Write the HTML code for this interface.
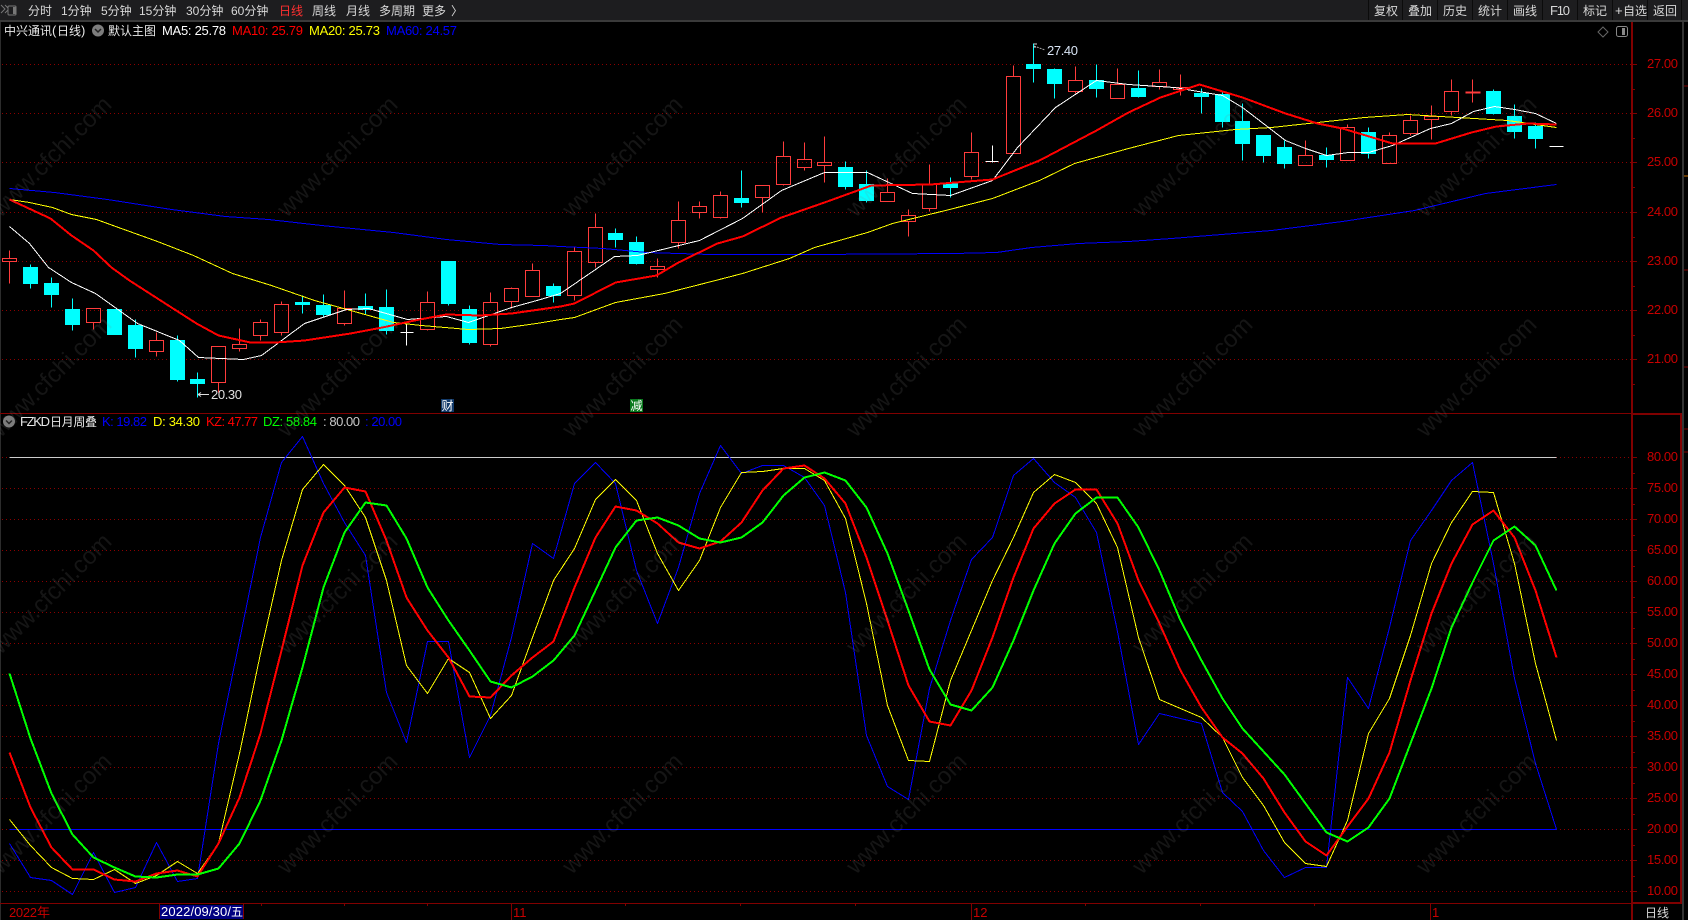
<!DOCTYPE html>
<html lang="zh">
<head>
<meta charset="utf-8">
<title>中兴通讯 日线</title>
<style>
html,body{margin:0;padding:0;background:#000;width:1688px;height:920px;overflow:hidden}
svg{display:block;position:absolute;left:0;top:0}
text{font-family:"Liberation Sans","Noto Sans CJK SC",sans-serif;font-size:12px}
.n{font-size:13px}
.tb{fill:#d8d8d8}
.ax{fill:#c80000;font-size:13px}
.wm{font-size:24px;fill:rgba(128,128,128,.16)}
.l{fill:none;shape-rendering:crispEdges;stroke-linejoin:round}
</style>
</head>
<body>
<svg width="1688" height="920" viewBox="0 0 1688 920" xmlns="http://www.w3.org/2000/svg">
<rect width="1688" height="920" fill="#000"/>

<!-- toolbar -->
<rect x="0" y="0" width="1688" height="20" fill="#1d1d1f"/>
<rect x="0" y="20" width="1688" height="2" fill="#3a3a3a"/>
<path d="M1368.5 0V20M1402.5 0V20M1437.5 0V20M1472.5 0V20M1507.5 0V20M1542.5 0V20M1577.5 0V20M1612.5 0V20M1647.5 0V20M1681.5 0V20" stroke="#0b0b0b" stroke-width="1"/>
<path d="M1 5l4 4-4 4M5 5l4 4-4 4" fill="none" stroke="#777" stroke-width="1"/>
<rect x="8" y="6" width="8" height="9" rx="1" fill="#1d1d1f" stroke="#777"/><rect x="13" y="7" width="3" height="7" fill="#777"/>

<g class="tb">
<text x="28" y="15">分时</text>
<text x="61" y="15">1分钟</text>
<text x="101" y="15">5分钟</text>
<text x="139" y="15">15分钟</text>
<text x="186" y="15">30分钟</text>
<text x="231" y="15">60分钟</text>
<text x="279" y="15" style="fill:#ff3030">日线</text>
<text x="312" y="15">周线</text>
<text x="346" y="15">月线</text>
<text x="379" y="15">多周期</text>
<text x="422" y="15">更多</text>
<text x="451" y="15">〉</text>
<text x="1374" y="15">复权</text>
<text x="1408" y="15">叠加</text>
<text x="1443" y="15">历史</text>
<text x="1478" y="15">统计</text>
<text x="1513" y="15">画线</text>
<text x="1550" y="15" class="n" textLength="20">F10</text>
<text x="1583" y="15">标记</text>
<text x="1615" y="15" class="n">+</text><text x="1623" y="15">自选</text>
<text x="1653" y="15">返回</text>
</g>

<!-- frame -->
<rect x="0" y="22" width="1" height="898" fill="#2c2c2c"/>
<rect x="1682" y="22" width="2" height="898" fill="#333"/>
<path d="M1684 86h4M1684 270h4M1684 367h4M1684 429h4M1684 452h4" stroke="#800000" stroke-width="1"/>
<path d="M1684 176h4" stroke="#c87000" stroke-width="1"/>

<!-- grid -->
<path d="M2 64.5H1632M2 113.5H1632M2 162.5H1632M2 212.5H1632M2 261.5H1632M2 310.5H1632M2 359.5H1632M2 457.5H9M1556 457.5H1632M2 488.5H1632M2 519.5H1632M2 550.5H1632M2 581.5H1632M2 612.5H1632M2 643.5H1632M2 674.5H1632M2 705.5H1632M2 736.5H1632M2 767.5H1632M2 798.5H1632M2 829.5H9M1556 829.5H1632M2 860.5H1632M2 891.5H1632" stroke="#8c0000" stroke-width="1" stroke-dasharray="1 3" fill="none"/>

<!-- axes -->
<path d="M0 413.5H1632" stroke="#800000" stroke-width="1"/>
<path d="M0 903.5H1682" stroke="#800000" stroke-width="1"/>
<rect x="1631" y="22" width="2" height="898" fill="#800000"/>
<rect x="1632" y="413" width="50" height="2" fill="#800000"/>
<rect x="1632" y="902" width="50" height="2" fill="#800000"/>
<rect x="1680" y="413" width="2" height="491" fill="#800000"/>
<path d="M1632 64.5h5M1632 113.5h5M1632 162.5h5M1632 212.5h5M1632 261.5h5M1632 310.5h5M1632 359.5h5M1632 457.5h5M1632 488.5h5M1632 519.5h5M1632 550.5h5M1632 581.5h5M1632 612.5h5M1632 643.5h5M1632 674.5h5M1632 705.5h5M1632 736.5h5M1632 767.5h5M1632 798.5h5M1632 829.5h5M1632 860.5h5M1632 891.5h5" stroke="#800000" stroke-width="1"/>
<path d="M1632 89.5h3M1632 138.5h3M1632 187.5h3M1632 237.5h3M1632 286.5h3M1632 335.5h3M1632 384.5h3M1632 473.5h3M1632 504.5h3M1632 535.5h3M1632 566.5h3M1632 597.5h3M1632 628.5h3M1632 659.5h3M1632 690.5h3M1632 721.5h3M1632 752.5h3M1632 783.5h3M1632 814.5h3M1632 845.5h3M1632 876.5h3" stroke="#800000" stroke-width="1"/>
<g class="ax">
<text class="ax" x="1647" y="68" textLength="31">27.00</text>
<text class="ax" x="1647" y="117" textLength="31">26.00</text>
<text class="ax" x="1647" y="166" textLength="31">25.00</text>
<text class="ax" x="1647" y="216" textLength="31">24.00</text>
<text class="ax" x="1647" y="265" textLength="31">23.00</text>
<text class="ax" x="1647" y="314" textLength="31">22.00</text>
<text class="ax" x="1647" y="363" textLength="31">21.00</text>
<text class="ax" x="1647" y="461" textLength="31">80.00</text>
<text class="ax" x="1647" y="492" textLength="31">75.00</text>
<text class="ax" x="1647" y="523" textLength="31">70.00</text>
<text class="ax" x="1647" y="554" textLength="31">65.00</text>
<text class="ax" x="1647" y="585" textLength="31">60.00</text>
<text class="ax" x="1647" y="616" textLength="31">55.00</text>
<text class="ax" x="1647" y="647" textLength="31">50.00</text>
<text class="ax" x="1647" y="678" textLength="31">45.00</text>
<text class="ax" x="1647" y="709" textLength="31">40.00</text>
<text class="ax" x="1647" y="740" textLength="31">35.00</text>
<text class="ax" x="1647" y="771" textLength="31">30.00</text>
<text class="ax" x="1647" y="802" textLength="31">25.00</text>
<text class="ax" x="1647" y="833" textLength="31">20.00</text>
<text class="ax" x="1647" y="864" textLength="31">15.00</text>
<text class="ax" x="1647" y="895" textLength="31">10.00</text>
</g>

<!-- bottom axis -->
<path d="M261.5 903v3M344.5 903v3M427.5 903v3M625.5 903v3M740.5 903v3M855.5 903v3M1085.5 903v3M1200.5 903v3M1314.5 903v3" stroke="#800000"/>
<path d="M511.5 903v17M971.5 903v17M1430.5 903v17M1632 903v17" stroke="#800000" stroke-width="1"/>
<text x="9" y="917" class="n" style="fill:#c80000" textLength="28">2022</text><text x="37" y="917" class="n" style="fill:#c80000">年</text>
<rect x="160" y="905" width="84" height="14" fill="#000080"/>
<path d="M159.500 904v15M243.500 904v15" stroke="#800000"/>
<text x="161" y="916" class="n" style="fill:#fff" textLength="70">2022/09/30/</text><text x="231" y="916" style="fill:#fff">五</text>
<text x="513" y="917" class="n" style="fill:#c80000">11</text>
<text x="973" y="917" class="n" style="fill:#c80000">12</text>
<text x="1432" y="917" class="n" style="fill:#c80000">1</text>
<text x="1645" y="917" style="fill:#d8d8d8">日线</text>

<g transform="translate(.5,.5)">
<!-- candles -->
<path fill="none" stroke="#ff3c3c" stroke-width="1" d="
M9 250V258M9 261V283M2 258H16V261H2Z
M93 322V329M86 308H100V322H86Z
M156 332V340M156 351V356M149 340H163V351H149Z
M218 382V392M211 346H225V382H211Z
M239 328V344M239 348V351M232 344H246V348H232Z
M260 319V322M260 335V340M253 322H267V335H253Z
M281 301V304M281 332V335M274 304H288V332H274Z
M344 290V308M344 323V325M337 308H351V323H337Z
M427 291V302M427 329V330M420 302H434V329H420Z
M490 292V302M490 344V346M483 302H497V344H483Z
M511 287V288M511 301V308M504 288H518V301H504Z
M532 263V270M525 270H539V296H525Z
M574 247V251M574 295V300M567 251H581V295H567Z
M595 213V227M595 262V267M588 227H602V262H588Z
M657 258V266M657 269V277M650 266H664V269H650Z
M678 201V220M678 242V248M671 220H685V242H671Z
M699 201V206M699 212V218M692 206H706V212H692Z
M720 191V195M720 217V218M713 195H727V217H713Z
M762 197V212M755 185H769V197H755Z
M783 141V156M783 184V185M776 156H790V184H776Z
M804 142V159M804 167V170M797 159H811V167H797Z
M824 136V162M824 165V182M817 162H831V165H817Z
M887 178V192M880 192H894V201H880Z
M908 209V215M908 221V236M901 215H915V221H901Z
M929 164V184M929 208V211M922 184H936V208H922Z
M971 132V152M971 176V179M964 152H978V176H964Z
M1013 65V76M1006 76H1020V153H1006Z
M1075 66V80M1075 91V93M1068 80H1082V91H1068Z
M1117 68V84M1110 84H1124V98H1110Z
M1159 69V82M1159 86V89M1152 82H1166V86H1152Z
M1180 74V87M1180 89V95M1173 87H1187V89H1173Z
M1305 140V155M1298 155H1312V165H1298Z
M1347 124V127M1340 127H1354V160H1340Z
M1389 132V135M1382 135H1396V163H1382Z
M1410 115V120M1410 133V135M1403 120H1417V133H1403Z
M1431 105V116M1431 119V139M1424 116H1438V119H1424Z
M1451 79V91M1451 111V115M1444 91H1458V111H1444Z
M1472 79V102"/>
<rect x="1465" y="91" width="15" height="2" fill="#ff3c3c"/>
<path fill="#0ff" stroke="#0ff" stroke-width="1" d="
M30 264V288M23 267H37V283H23Z
M51 277V307M44 283H58V294H44Z
M72 298V330M65 309H79V324H65Z
M107 309H121V334H107Z
M135 319V357M128 325H142V348H128Z
M177 335V381M170 340H184V379H170Z
M197 372V397M190 379H204V383H190Z
M302 295V313M295 302H309V304H295Z
M323 294V316M316 305H330V314H316Z
M365 293V314M358 306H372V309H358Z
M386 289V334M379 307H393V330H379Z
M448 261V305M441 261H455V303H441Z
M469 305V344M462 309H476V342H462Z
M553 283V302M546 286H560V295H546Z
M615 228V247M608 233H622V239H608Z
M636 236V264M629 242H643V263H629Z
M741 170V207M734 198H748V202H734Z
M845 161V189M838 167H852V186H838Z
M866 170V202M859 184H873V200H859Z
M950 177V197M943 183H957V187H943Z
M1033 43V82M1026 64H1040V68H1026Z
M1054 68V98M1047 69H1061V83H1047Z
M1096 64V97M1089 80H1103V88H1089Z
M1138 70V97M1131 88H1145V96H1131Z
M1201 88V113M1194 93H1208V96H1194Z
M1222 91V127M1215 94H1229V121H1215Z
M1242 103V160M1235 121H1249V143H1235Z
M1263 135V162M1256 135H1270V155H1256Z
M1284 140V168M1277 147H1291V163H1277Z
M1326 147V167M1319 155H1333V159H1319Z
M1368 127V158M1361 132H1375V153H1361Z
M1493 89V114M1486 91H1500V113H1486Z
M1514 104V138M1507 116H1521V131H1507Z
M1535 122V148M1528 126H1542V138H1528Z"/>
<path fill="none" stroke="#fff" stroke-width="1" d="M406 323V345M400 332H413M992 145V162M985 161H998M1549 146H1563"/>

<!-- MAs -->
<polyline class="l" stroke="#0000ff" stroke-width="1" points="9,188 54,192 107,199 171,209 225,216 268,219 321,225 393,232 446,239 500,244 543,245 560,246 603,248 646,252 710,254 810,254 953,253 996,252 1031,247 1078,243 1128,241 1171,238 1271,230 1342,221 1414,210 1485,193 1556,184"/>
<polyline class="l" stroke="#ffff00" stroke-width="1" points="9,199 29,202 52,207 71,214 96,219 118,227 157,241 193,255 232,273 271,285 314,300 343,308 393,322 421,325 468,329 500,328 536,323 560,319 574,317 615,302 664,293 715,280 742,273 789,258 814,247 867,232 892,223 949,209 992,198 1039,180 1074,163 1128,148 1178,135 1235,129 1271,127 1317,122 1364,117 1407,114 1457,117 1507,120 1556,127"/>
<polyline class="l" stroke="#ffffff" stroke-width="1" points="9,226 29,243 48,267 71,282 95,293 137,323 179,340 198,357 243,359 261,355 304,323 346,309 368,308 407,319 446,316 468,322 511,307 540,299 560,293 614,256 637,255 699,240 742,218 781,190 824,172 867,172 912,193 950,195 992,180 1017,147 1055,107 1096,80 1128,84 1174,87 1222,95 1242,107 1285,140 1305,148 1326,155 1348,152 1368,152 1392,145 1430,128 1451,123 1473,111 1494,106 1514,109 1535,113 1556,123"/>
<polyline class="l" stroke="#ff0000" stroke-width="2" points="9,199 50,218 71,235 93,250 111,267 129,280 171,307 196,323 218,335 250,342 275,342 304,340 350,333 382,327 414,320 446,314 479,315 511,313 560,306 574,303 615,282 656,275 678,262 717,243 742,236 781,217 824,202 871,185 930,184 992,179 1039,160 1096,130 1128,112 1160,97 1199,84 1242,97 1285,113 1317,123 1342,128 1392,143 1435,143 1471,132 1496,126 1528,123 1556,124"/>

<!-- sub lines -->
<path d="M9 457H1556" stroke="#cccccc" stroke-width="1"/>
<path d="M9 829H1556" stroke="#0000ff" stroke-width="1"/>

<polyline class="l" stroke="#0000ff" stroke-width="1" points="9,843 30,877 51,880 72,894 93,852 114,892 135,887 156,842 177,881 197,878 218,743 239,640 260,537 281,462 302,436 323,483 344,522 365,555 386,692 406,742 427,641 448,641 469,757 490,715 511,637 532,543 553,558 574,483 595,462 615,483 636,570 657,623 678,567 699,493 720,445 741,473 762,465 783,465 804,477 824,505 845,592 866,735 887,786 908,799 929,688 950,620 971,559 992,537 1013,475 1033,458 1054,482 1075,497 1096,532 1117,631 1138,744 1159,713 1180,718 1201,723 1222,792 1242,811 1263,850 1284,877 1305,867 1326,867 1347,677 1368,708 1389,627 1410,540 1431,510 1451,480 1472,462 1493,563 1514,678 1535,763 1556,829"/>
<polyline class="l" stroke="#ffff00" stroke-width="1" points="9,819 30,845 51,867 72,878 93,879 114,869 135,883 156,875 177,861 197,873 218,843 239,753 260,653 281,560 302,489 323,464 344,485 365,517 386,580 406,665 427,693 448,658 469,672 490,718 511,695 532,637 553,580 574,548 595,499 615,479 636,500 657,553 678,590 699,560 720,507 741,472 762,471 783,468 804,468 824,480 845,518 866,603 887,705 908,760 929,761 950,680 971,630 992,580 1013,537 1033,492 1054,474 1075,482 1096,503 1117,547 1138,637 1159,699 1180,708 1201,717 1222,737 1242,777 1263,805 1284,842 1305,863 1326,866 1347,820 1368,733 1389,698 1410,635 1431,563 1451,522 1472,491 1493,492 1514,563 1535,663 1556,740"/>
<polyline class="l" stroke="#ff0000" stroke-width="2" points="9,752 30,807 51,847 72,869 93,869 114,879 135,881 156,873 177,870 197,876 218,843 239,797 260,733 281,650 302,565 323,512 344,487 365,491 386,540 406,597 427,630 448,657 469,696 490,697 511,675 532,657 553,641 574,587 595,537 615,506 636,510 657,523 678,542 699,548 720,541 741,522 762,490 783,468 804,465 824,478 845,503 866,557 887,620 908,685 929,721 950,725 971,690 992,637 1013,577 1033,528 1054,503 1075,489 1096,489 1117,523 1138,580 1159,623 1180,670 1201,707 1222,737 1242,753 1263,778 1284,812 1305,841 1326,855 1347,826 1368,798 1389,752 1410,680 1431,613 1451,563 1472,524 1493,510 1514,537 1535,590 1556,657"/>
<polyline class="l" stroke="#00ff00" stroke-width="2" points="9,673 30,738 51,793 72,834 93,857 114,867 135,876 156,877 177,874 197,874 218,868 239,843 260,800 281,740 302,667 323,587 344,532 365,502 386,505 406,538 427,587 448,620 469,650 490,681 511,687 532,676 553,660 574,635 595,590 615,547 636,520 657,517 678,525 699,538 720,542 741,537 762,522 783,495 804,477 824,472 845,480 866,507 887,553 908,610 929,669 950,704 971,710 992,687 1013,640 1033,590 1054,543 1075,513 1096,497 1117,497 1138,527 1159,570 1180,620 1201,660 1222,698 1242,728 1263,751 1284,774 1305,803 1326,832 1347,841 1368,827 1389,798 1410,743 1431,688 1451,627 1472,582 1493,540 1514,526 1535,545 1556,590"/>
</g>

<!-- annotations -->
<path d="M198 394.500H209M198 394.500l3-2M198 394.500l3 2" stroke="#ddd" stroke-width="1" fill="none"/>
<text x="211" y="399" class="n" style="fill:#e0e0e0" textLength="31">20.30</text>
<path d="M1033.500 44H1037M1033.500 47H1036" stroke="#ddd" stroke-width="1" fill="none"/>
<path d="M1034 46L1045 50" stroke="#aaa" stroke-width="1" stroke-dasharray="2 1" fill="none"/>
<text x="1047" y="55" class="n" style="fill:#d8e4f4" textLength="31">27.40</text>

<rect x="441" y="399" width="13" height="13" fill="#123a6a"/>
<text x="441.500" y="410" style="fill:#fff">财</text>
<rect x="630" y="399" width="13" height="13" fill="#0a7a1e"/>
<text x="630.500" y="410" style="fill:#fff">减</text>

<!-- top legend -->
<text x="4" y="35" style="fill:#e8e8e8" textLength="48">中兴通讯</text>
<text x="52" y="35" style="fill:#e8e8e8" class="n">(</text>
<text x="57" y="35" style="fill:#e8e8e8">日线</text>
<text x="81" y="35" style="fill:#e8e8e8" class="n">)</text>
<circle cx="98" cy="30.500" r="6" fill="#7d7d7d"/>
<path d="M95 29l3 3 3-3" fill="none" stroke="#222" stroke-width="1.500"/>
<text x="108" y="35" style="fill:#e8e8e8">默认主图</text>
<text x="162" y="35" class="n" style="fill:#fff" textLength="64">MA5: 25.78</text>
<text x="232" y="35" class="n" style="fill:#f00" textLength="71">MA10: 25.79</text>
<text x="309" y="35" class="n" style="fill:#ff0" textLength="71">MA20: 25.73</text>
<text x="386" y="35" class="n" style="fill:#00f" textLength="71">MA60: 24.57</text>

<path d="M1603 27l5 5-5 5-5-5z" fill="none" stroke="#666" stroke-width="1"/>
<rect x="1616.500" y="26.500" width="11" height="10" rx="2" fill="none" stroke="#888"/>
<rect x="1622" y="28" width="3" height="7" fill="#888"/>

<!-- sub legend -->
<circle cx="9" cy="421.500" r="6" fill="#7d7d7d"/>
<path d="M6 420.500l3 3 3-3" fill="none" stroke="#222" stroke-width="1.500"/>
<text x="20" y="426" class="n" style="fill:#e8e8e8" textLength="30">FZKD</text>
<text x="50" y="426" style="fill:#e8e8e8" textLength="47">日月周叠</text>
<text x="102" y="426" class="n" style="fill:#00f" textLength="45">K: 19.82</text>
<text x="153" y="426" class="n" style="fill:#ff0" textLength="47">D: 34.30</text>
<text x="206" y="426" class="n" style="fill:#f00" textLength="52">KZ: 47.77</text>
<text x="263" y="426" class="n" style="fill:#0f0" textLength="54">DZ: 58.84</text>
<text x="323" y="426" class="n" style="fill:#c8c8c8" textLength="37">: 80.00</text>
<text x="365" y="426" class="n" style="fill:#00f" textLength="37">: 20.00</text>

<!-- watermarks -->
<g class="wm">
<text class="wm" text-anchor="end" transform="translate(113,106) rotate(-45)">www.cfchi.com</text>
<text class="wm" text-anchor="end" transform="translate(399,106) rotate(-45)">www.cfchi.com</text>
<text class="wm" text-anchor="end" transform="translate(684,106) rotate(-45)">www.cfchi.com</text>
<text class="wm" text-anchor="end" transform="translate(968,106) rotate(-45)">www.cfchi.com</text>
<text class="wm" text-anchor="end" transform="translate(1254,106) rotate(-45)">www.cfchi.com</text>
<text class="wm" text-anchor="end" transform="translate(1538,106) rotate(-45)">www.cfchi.com</text>
<text class="wm" text-anchor="end" transform="translate(113,326) rotate(-45)">www.cfchi.com</text>
<text class="wm" text-anchor="end" transform="translate(399,326) rotate(-45)">www.cfchi.com</text>
<text class="wm" text-anchor="end" transform="translate(684,326) rotate(-45)">www.cfchi.com</text>
<text class="wm" text-anchor="end" transform="translate(968,326) rotate(-45)">www.cfchi.com</text>
<text class="wm" text-anchor="end" transform="translate(1254,326) rotate(-45)">www.cfchi.com</text>
<text class="wm" text-anchor="end" transform="translate(1538,326) rotate(-45)">www.cfchi.com</text>
<text class="wm" text-anchor="end" transform="translate(113,543) rotate(-45)">www.cfchi.com</text>
<text class="wm" text-anchor="end" transform="translate(399,543) rotate(-45)">www.cfchi.com</text>
<text class="wm" text-anchor="end" transform="translate(684,543) rotate(-45)">www.cfchi.com</text>
<text class="wm" text-anchor="end" transform="translate(968,543) rotate(-45)">www.cfchi.com</text>
<text class="wm" text-anchor="end" transform="translate(1254,543) rotate(-45)">www.cfchi.com</text>
<text class="wm" text-anchor="end" transform="translate(1538,543) rotate(-45)">www.cfchi.com</text>
<text class="wm" text-anchor="end" transform="translate(113,763) rotate(-45)">www.cfchi.com</text>
<text class="wm" text-anchor="end" transform="translate(399,763) rotate(-45)">www.cfchi.com</text>
<text class="wm" text-anchor="end" transform="translate(684,763) rotate(-45)">www.cfchi.com</text>
<text class="wm" text-anchor="end" transform="translate(968,763) rotate(-45)">www.cfchi.com</text>
<text class="wm" text-anchor="end" transform="translate(1254,763) rotate(-45)">www.cfchi.com</text>
<text class="wm" text-anchor="end" transform="translate(1538,763) rotate(-45)">www.cfchi.com</text>
</g>
</svg>
</body>
</html>
